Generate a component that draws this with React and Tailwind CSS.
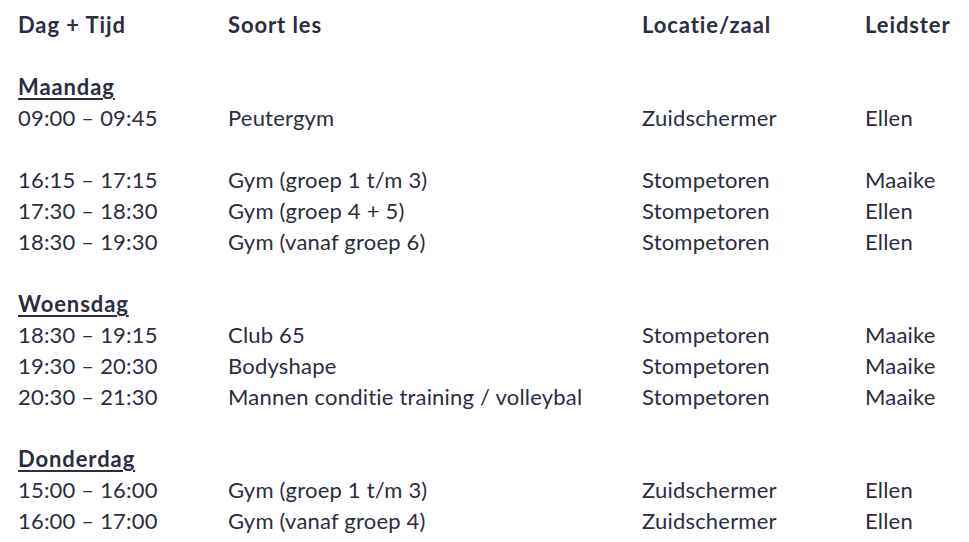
const schedule = [
  {
    day: 'Maandag',
    groups: [
      [['09:00 – 09:45', 'Peutergym', 'Zuidschermer', 'Ellen']],
      [
        ['16:15 – 17:15', 'Gym (groep 1 t/m 3)', 'Stompetoren', 'Maaike'],
        ['17:30 – 18:30', 'Gym (groep 4 + 5)', 'Stompetoren', 'Ellen'],
        ['18:30 – 19:30', 'Gym (vanaf groep 6)', 'Stompetoren', 'Ellen'],
      ],
    ],
  },
  {
    day: 'Woensdag',
    groups: [
      [
        ['18:30 – 19:15', 'Club 65', 'Stompetoren', 'Maaike'],
        ['19:30 – 20:30', 'Bodyshape', 'Stompetoren', 'Maaike'],
        ['20:30 – 21:30', 'Mannen conditie training / volleybal', 'Stompetoren', 'Maaike'],
      ],
    ],
  },
  {
    day: 'Donderdag',
    groups: [
      [
        ['15:00 – 16:00', 'Gym (groep 1 t/m 3)', 'Zuidschermer', 'Ellen'],
        ['16:00 – 17:00', 'Gym (vanaf groep 4)', 'Zuidschermer', 'Ellen'],
      ],
    ],
  },
];

const Row = ({ cells, bold }) => (
  <div
    className={`grid grid-cols-[210px_414px_223px_1fr] h-[31px] items-center ${
      bold ? 'font-bold tracking-[0.9px]' : 'tracking-[0.2px]'
    }`}
  >
    {cells.map((c, i) => (
      <div key={i} className="whitespace-nowrap">{c}</div>
    ))}
  </div>
);

const Blank = () => <div className="h-[31px]" />;

export default function App() {
  return (
    <div
      className="w-[969px] h-[542px] bg-white text-[#2b2d40] text-[22px] leading-[31px] pl-[18px] pt-[9px] overflow-hidden"
      style={{ fontFamily: 'Lato, "Noto Sans", sans-serif', fontVariantLigatures: 'none' }}
    >
      <Row bold cells={['Dag + Tijd', 'Soort les', 'Locatie/zaal', 'Leidster']} />
      {schedule.map((s) => (
        <div key={s.day}>
          <Blank />
          <div className="h-[31px] flex items-center">
            <span className="font-bold tracking-[0.9px] underline decoration-2 underline-offset-[3px]">{s.day}</span>
          </div>
          {s.groups.map((g, gi) => (
            <div key={gi}>
              {gi > 0 && <Blank />}
              {g.map((r, ri) => (
                <Row key={ri} cells={r} />
              ))}
            </div>
          ))}
        </div>
      ))}
    </div>
  );
}
